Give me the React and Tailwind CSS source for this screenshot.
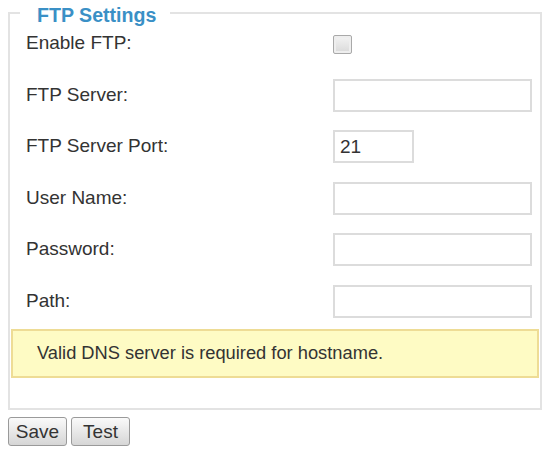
import React from 'react'

const rows = [
  { label: 'Enable FTP:', type: 'checkbox' },
  { label: 'FTP Server:', type: 'text' },
  { label: 'FTP Server Port:', type: 'port', value: '21' },
  { label: 'User Name:', type: 'text' },
  { label: 'Password:', type: 'text' },
  { label: 'Path:', type: 'text' },
]

function Field({ row }) {
  if (row.type === 'checkbox') {
    return (
      <span className="block w-[19px] h-[19px] mt-[2px] border border-[#a9a9a9] rounded-[2px] bg-gradient-to-b from-[#f4f4f4] to-[#d9d9d9] shadow-[inset_0_0_0_2px_#eeeeee]" />
    )
  }
  return (
    <input
      readOnly
      defaultValue={row.value || ''}
      className={`h-[33px] border-2 border-[#dcdcdc] bg-white px-[5px] text-[19px] text-[#333] outline-none ${row.type === 'port' ? 'w-[81px]' : 'w-[199px]'}`}
    />
  )
}

export default function App() {
  return (
    <div className="w-[546px] h-[459px] bg-white font-['Liberation_Sans',Arial,sans-serif] text-[#333]">
      <fieldset className="mx-[8px] w-[534px] border-2 border-[#e3e3e3] px-[1px] pt-[1px] pb-[30px]">
        <legend className="ml-[9px] pl-[17px] pr-[14px] pt-[4px] leading-[22px] text-[19.6px] font-bold text-[#3a90c6]">
          FTP Settings
        </legend>

        <div className="flex flex-col gap-[18.5px]">
          {rows.map((row) => (
            <div key={row.label} className="flex items-center h-[33px]">
              <span className="w-[322px] pl-[15px] text-[19px]">{row.label}</span>
              <Field row={row} />
            </div>
          ))}
        </div>

        <div className="mt-[11px] h-[49px] flex items-center pl-[24px] bg-[#fefbc4] border-2 border-[#eedc95] text-[18.3px] text-[#333]">
          Valid DNS server is required for hostname.
        </div>
      </fieldset>

      <div className="flex gap-[4px] mt-[7px] ml-[8px]">
        <button className="w-[59px] h-[29px] border border-[#9a9a9a] rounded-[3px] bg-gradient-to-b from-[#fafafa] to-[#d6d6d6] text-[19px] leading-none text-[#333]">
          Save
        </button>
        <button className="w-[59px] h-[29px] border border-[#9a9a9a] rounded-[3px] bg-gradient-to-b from-[#fafafa] to-[#d6d6d6] text-[19px] leading-none text-[#333]">
          Test
        </button>
      </div>
    </div>
  )
}
